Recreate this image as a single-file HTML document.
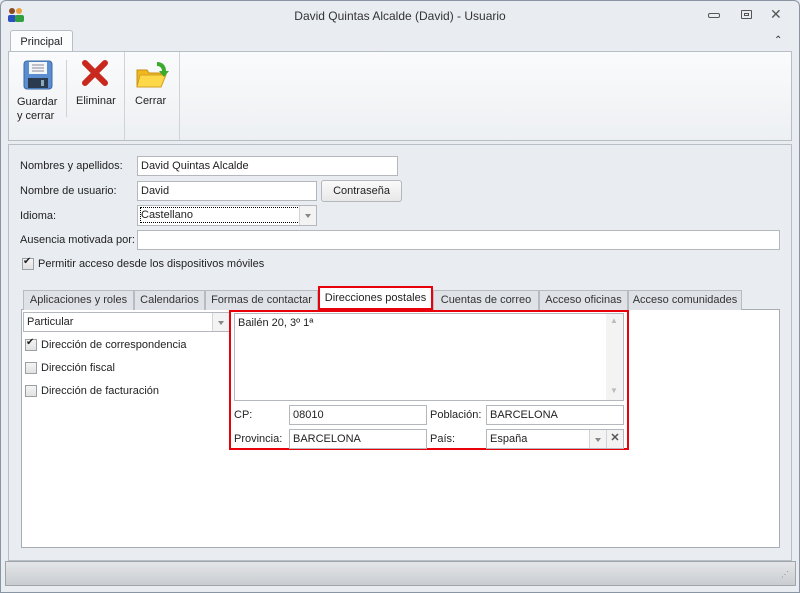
<!DOCTYPE html>
<html><head><meta charset="utf-8"><style>
*{box-sizing:border-box;margin:0;padding:0}
body{width:800px;height:593px;overflow:hidden;background:#e9ecf0;font-family:"Liberation Sans",sans-serif;font-size:11px;color:#222;position:relative}
.a{position:absolute}
.inp{position:absolute;background:#fff;border:1px solid #b4b8bd;padding:2px 3px;white-space:nowrap;line-height:14px;overflow:hidden}
.lbl{position:absolute;white-space:nowrap}
.tab{position:absolute;top:290px;height:20px;background:#dfe2e6;border:1px solid #b8bcc2;border-bottom:none;text-align:center;line-height:18px;color:#333;white-space:nowrap}
.cb{position:absolute;width:12px;height:12px;border:1px solid #9aa0a6;background:linear-gradient(#f4f4f4,#e2e2e2)}
.dd{position:absolute;top:0;right:0;width:17px;height:100%;border-left:1px solid #d0d3d7;background:#f3f3f3}
.dd:after{content:"";position:absolute;left:5px;top:8px;border:3px solid transparent;border-top:4px solid #888}
</style></head><body>
<div class="a" style="left:0;top:0;width:800px;height:593px;border:1px solid #8a95a3;border-radius:6px 6px 0 0"></div>
<svg class="a" style="left:7px;top:7px" width="18" height="16"><circle cx="5" cy="4" r="3" fill="#8a4a20"/><rect x="1" y="8" width="8" height="7" rx="2" fill="#2850c0"/><circle cx="12" cy="4" r="3" fill="#e8a040"/><rect x="8" y="8" width="9" height="7" rx="2" fill="#30a040"/></svg>
<div class="lbl" style="left:0;width:800px;top:9px;text-align:center;color:#333;font-size:12px">David Quintas Alcalde (David) - Usuario</div>
<div class="lbl" style="left:708px;top:13px;width:12px;height:5px;border:1.5px solid #555;border-radius:2px"></div>
<div class="lbl" style="left:741px;top:10px;width:11px;height:9px;border:1.5px solid #555;border-radius:1px"></div>
<div class="lbl" style="left:744px;top:13px;width:5px;height:3px;border:1px solid #555"></div>
<div class="lbl" style="left:770px;top:6px;font-size:14px;color:#555">✕</div>
<div class="lbl" style="left:774px;top:35px;font-size:10px;color:#333">⌃</div>
<div class="a" style="left:10px;top:30px;width:63px;height:22px;background:#fbfcfd;border:1px solid #b8bec6;border-bottom:none;border-radius:3px 3px 0 0;text-align:center;line-height:22px">Principal</div>
<div class="a" style="left:8px;top:51px;width:784px;height:90px;background:linear-gradient(#fafbfc,#edf0f3);border:1px solid #b8bec6"></div>
<div class="a" style="left:66px;top:60px;width:1px;height:57px;background:#cfd3d8"></div>
<div class="a" style="left:124px;top:52px;width:1px;height:88px;background:#cfd3d8"></div>
<div class="a" style="left:179px;top:52px;width:1px;height:88px;background:#cfd3d8"></div>
<svg class="a" style="left:23px;top:60px" width="30" height="30"><rect x="1" y="1" width="28" height="28" rx="3" fill="#5a8ed0" stroke="#3a6aa8"/><rect x="6" y="2" width="18" height="12" fill="#f4f6f8"/><path d="M9 5h12M9 8h12M9 11h12" stroke="#889" /><rect x="5" y="18" width="20" height="10" fill="#2c3a50"/><rect x="18" y="20" width="3" height="6" fill="#8ab"/></svg>
<svg class="a" style="left:82px;top:60px" width="26" height="26"><path d="M3 3L23 23M23 3L3 23" stroke="#c8281e" stroke-width="6" stroke-linecap="round"/></svg>
<svg class="a" style="left:135px;top:58px" width="34" height="32"><path d="M2 12h10l2 3h12v14H2z" fill="#f0b820" stroke="#c89010"/><path d="M5 17h26l-5 12H2z" fill="#ffd84a" stroke="#d0a020"/><path d="M22 4c6 0 9 4 9 9l3 0-5 6-5-6 3 0c0-3-2-5-5-5z" fill="#3caa2c"/></svg>
<div class="lbl" style="left:17px;top:95px;line-height:14px">Guardar<br>y cerrar</div>
<div class="lbl" style="left:76px;top:95px">Eliminar</div>
<div class="lbl" style="left:135px;top:95px">Cerrar</div>
<div class="a" style="left:8px;top:144px;width:784px;height:417px;border:1px solid #b8bec6;background:#e9ecf0"></div>
<div class="lbl" style="left:20px;top:160px">Nombres y apellidos:</div>
<div class="inp" style="left:137px;top:156px;width:261px;height:20px">David Quintas Alcalde</div>
<div class="lbl" style="left:20px;top:185px">Nombre de usuario:</div>
<div class="inp" style="left:137px;top:181px;width:180px;height:20px">David</div>
<div class="a" style="left:321px;top:180px;width:81px;height:22px;border:1px solid #b4b8bd;border-radius:3px;background:linear-gradient(#fafafa,#e8e8e8);text-align:center;line-height:20px">Contraseña</div>
<div class="lbl" style="left:20px;top:210px">Idioma:</div>
<div class="inp" style="left:137px;top:205px;width:180px;height:21px"><span style="outline:1px dotted #000;display:inline-block;width:158px">Castellano</span><div class="dd"></div></div>
<div class="lbl" style="left:20px;top:234px">Ausencia motivada por:</div>
<div class="inp" style="left:137px;top:230px;width:643px;height:20px"></div>
<div class="cb" style="left:22px;top:258px"></div><div class="lbl" style="left:23px;top:256px;font-size:10px">✔</div>
<div class="lbl" style="left:38px;top:258px">Permitir acceso desde los dispositivos móviles</div>
<div class="a" style="left:21px;top:309px;width:759px;height:239px;background:#fff;border:1px solid #a8adb3"></div>
<div class="tab" style="left:23px;width:111px">Aplicaciones y roles</div>
<div class="tab" style="left:134px;width:71px">Calendarios</div>
<div class="tab" style="left:205px;width:113px">Formas de contactar</div>
<div class="a" style="left:318px;top:286px;width:115px;height:24px;background:#fff;border:2px solid #e8000a;text-align:center;line-height:20px;white-space:nowrap">Direcciones postales</div>
<div class="tab" style="left:433px;width:106px">Cuentas de correo</div>
<div class="tab" style="left:539px;width:89px">Acceso oficinas</div>
<div class="tab" style="left:628px;width:114px">Acceso comunidades</div>
<div class="inp" style="left:23px;top:312px;width:207px;height:20px">Particular<div class="dd"></div></div>
<div class="cb" style="left:25px;top:339px"></div><div class="lbl" style="left:26px;top:337px;font-size:10px">✔</div>
<div class="lbl" style="left:41px;top:339px">Dirección de correspondencia</div>
<div class="cb" style="left:25px;top:362px"></div><div class="lbl" style="left:41px;top:362px">Dirección fiscal</div>
<div class="cb" style="left:25px;top:385px"></div><div class="lbl" style="left:41px;top:385px">Dirección de facturación</div>
<div class="a" style="left:229px;top:310px;width:400px;height:140px;border:2px solid #e8000a"></div>
<div class="inp" style="left:234px;top:313px;width:390px;height:88px">Bailén 20, 3º 1ª</div>
<div class="a" style="left:606px;top:314px;width:17px;height:86px;background:#f3f3f3"></div>
<div class="lbl" style="left:610px;top:316px;font-size:8px;color:#bbb">▲</div>
<div class="lbl" style="left:610px;top:386px;font-size:8px;color:#bbb">▼</div>
<div class="lbl" style="left:234px;top:409px">CP:</div>
<div class="inp" style="left:289px;top:405px;width:138px;height:20px">08010</div>
<div class="lbl" style="left:430px;top:409px">Población:</div>
<div class="inp" style="left:486px;top:405px;width:138px;height:20px">BARCELONA</div>
<div class="lbl" style="left:234px;top:433px">Provincia:</div>
<div class="inp" style="left:289px;top:429px;width:138px;height:20px">BARCELONA</div>
<div class="lbl" style="left:430px;top:433px">País:</div>
<div class="inp" style="left:486px;top:429px;width:138px;height:20px">España<div class="dd" style="right:17px"></div><div class="a" style="right:0;top:0;width:17px;height:100%;background:#f3f3f3;border-left:1px solid #d0d3d7;text-align:center;font-weight:bold;color:#555;line-height:17px">✕</div></div>
<div class="a" style="left:5px;top:561px;width:791px;height:25px;border:1px solid #a0a5ab;background:linear-gradient(#e4e6e9,#c9ccd0)"></div>
<div class="lbl" style="left:781px;top:570px;font-size:8px;color:#888;letter-spacing:-1px">⋰</div>
</body></html>
